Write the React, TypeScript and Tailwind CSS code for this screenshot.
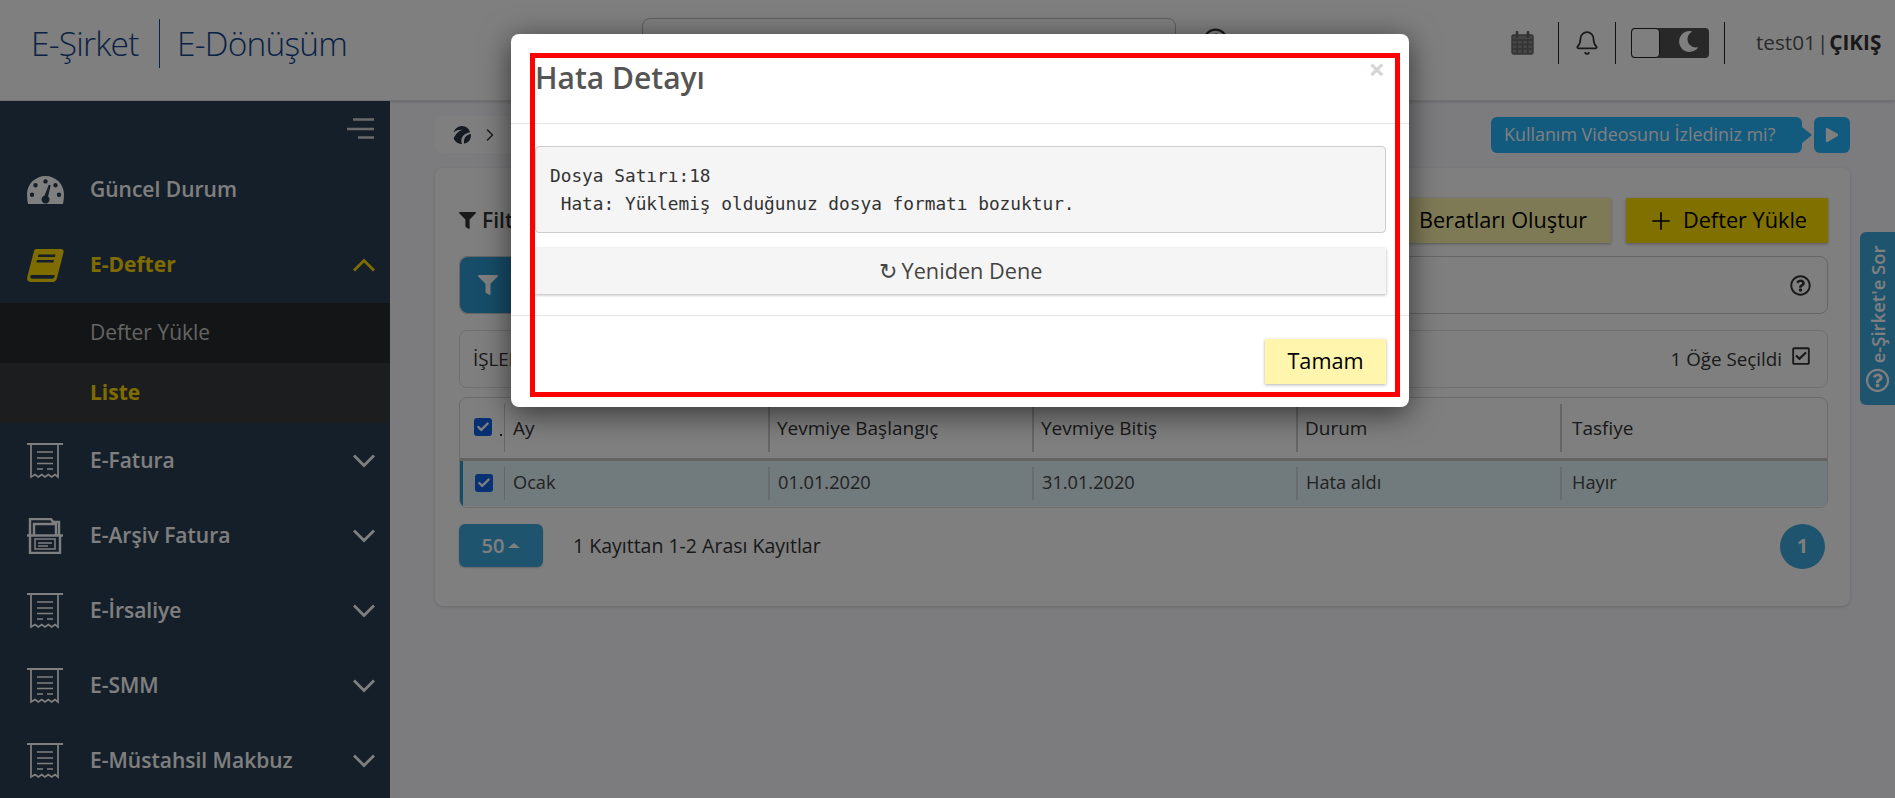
import { Bell, Check, ChevronRight, Plus } from 'lucide-react';
import { FaFilter, FaMoon, FaPlay, FaRegCheckSquare, FaRegQuestionCircle } from 'react-icons/fa';

function GaugeIcon() {
  return (
    <svg width="37" height="28" viewBox="0 0 37 28" fill="currentColor">
      <path
        fillRule="evenodd"
        d="M18.5 0C8.3 0 0 8.2 0 18.4c0 3.4.4 6.600 1 9.600h35c.6-3 1-6.200 1-9.600C37 8.200 28.700 0 18.500 0z
        M18.500 3.200a2.200 2.200 0 110 4.400 2.200 2.200 0 010-4.400z M8.500 7a2.200 2.200 0 110 4.400A2.200 2.200 0 018.500 7z
        M28.500 7a2.200 2.200 0 110 4.400 2.200 2.200 0 010-4.400z M5 16.500a2.200 2.200 0 110 4.400 2.200 2.200 0 010-4.400z
        M32 16.500a2.200 2.200 0 110 4.400 2.200 2.200 0 010-4.400z M21.800 8.700l1.900.5-2.600 11.200a4 4 0 11-3.500-.800z"
      />
    </svg>
  );
}

function BookIcon() {
  return (
    <svg width="37" height="33" viewBox="0 0 37 33" fill="currentColor">
      <path
        fillRule="evenodd"
        d="M9 0h25c2 0 3 1.500 2.500 3.500L30 29c-.700 2.500-2 4-4.500 4H4c-3 0-4.500-2-3.700-5L7 2c.300-1.200 1-2 2-2z
        M5 26c-1 0-1.800.7-1.800 1.800S4 29.800 5 29.800h20c1.500 0 2-.8 2.300-2l.4-1.800z
        M11.500 5.500l-.6 2.500h17l.6-2.500z M10 11l-.6 2.500h17l.6-2.500z"
      />
    </svg>
  );
}

function ReceiptIcon() {
  return (
    <svg width="36" height="36" viewBox="0 0 36 36" fill="none" stroke="currentColor" strokeWidth="1.700">
      <path d="M0 1h36" strokeWidth="2" />
      <path d="M4 1v33l4-2.500 3.300 2.500 3.400-2.500 3.300 2.500 3.300-2.500 3.400 2.500 3.300-2.500 3 2.500V1" />
      <path d="M10 9h16M10 15h16M10 20.500h16" />
      <path d="M10 26h6M20 26h6" />
    </svg>
  );
}

function ArchiveIcon() {
  return (
    <svg width="36" height="36" viewBox="0 0 36 36" fill="none" stroke="currentColor" strokeWidth="2.400">
      <path d="M3 18V1h21l2 3h6v14" />
      <path d="M7 17V6h22v11" />
      <path d="M0 17.500h36" />
      <path d="M3 18v17h30V18" />
      <path d="M8 21h20v10H8zM11 25h14M11 28h10" strokeWidth="1.500" />
    </svg>
  );
}

function BrandIcon() {
  return (
    <svg width="18" height="18" viewBox="0 0 18 18" fill="#283544">
      <path d="M9 0a9 9 0 00-8.700 6.800C2.500 4.500 6 3.300 9.500 3.800 6.500 5 3 7 .7 12.500 2 15.800 5.200 18 9 18c-1-2.500-1-5 .5-7.300C11 8 14 7 17.200 6.300A9 9 0 009 0zM17.800 8c-2.800.5-5.300 2-6.300 4.500-.7 1.800-.7 3.500-.2 5.200A9 9 0 0018 9c0-.3 0-.7-.2-1z" />
    </svg>
  );
}

function HamburgerIcon() {
  return (
    <svg width="27" height="21" viewBox="0 0 27 21" stroke="#d5d5d5" strokeWidth="2.500">
      <path d="M6 1.500h21M0 11h27M11 19.500h16" />
    </svg>
  );
}

function CalendarIcon() {
  return (
    <svg width="23" height="24" viewBox="0 0 23 24" fill="#8a8a8a" stroke="#666" strokeWidth="1.400" className="ml-[283px]">
      <rect x="1" y="4" width="21" height="19" rx="1.500" />
      <path d="M1 9h21M1 13.500h21M1 18h21M6.200 9v14M11.500 9v14M16.800 9v14" fill="none" />
      <path d="M6 1v5M17 1v5" strokeWidth="2.600" strokeLinecap="round" />
    </svg>
  );
}

function MenuChevron({ up }: { up?: boolean }) {
  return (
    <svg width="22" height="14" viewBox="0 0 22 14" fill="none" stroke="currentColor" strokeWidth="2.800" className="mr-[15px]">
      <path d={up ? 'M1 12.500L11 2.500l10 10' : 'M1 1.500l10 10 10-10'} />
    </svg>
  );
}

function TableCheckbox() {
  return (
    <span className="flex h-[18px] w-[18px] items-center justify-center rounded-[3px] bg-[#0f62e6]">
      <Check size={14} strokeWidth={4} className="text-white" />
    </span>
  );
}

const menu = [
  { label: 'E-Fatura', icon: <ReceiptIcon /> },
  { label: 'E-Arşiv Fatura', icon: <ArchiveIcon /> },
  { label: 'E-İrsaliye', icon: <ReceiptIcon /> },
  { label: 'E-SMM', icon: <ReceiptIcon /> },
  { label: 'E-Müstahsil Makbuz', icon: <ReceiptIcon /> },
];

const columns = ['Yevmiye Başlangıç', 'Yevmiye Bitiş', 'Durum'];
const rowValues = ['01.01.2020', '31.01.2020', 'Hata aldı'];

export default function App() {
  return (
    <div className="relative h-[798px] w-[1895px] overflow-hidden bg-[#f8f8fc] font-['Open_Sans',sans-serif] text-[#333]">
      {/* Üst bar */}
      <header className="flex h-[101px] items-center border-b border-[#e0e0e0] bg-white pb-[14px] shadow-[0_1px_3px_rgba(0,0,0,0.15)]">
        <div className="ml-[31px] flex w-[320px] items-center text-[33.5px] font-light tracking-[-0.8px] text-[#12458c]">
          <span>E-Şirket</span>
          <span className="ml-[20px] mr-[17px] h-[49px] w-[1.500px] bg-[#12458c]" />
          <span>E-Dönüşüm</span>
        </div>
        <div className="ml-[291px] flex h-[50px] w-[534px] items-start rounded-lg border border-[#bbb] pl-[14px] pt-[16px] text-[#333]">
          <span className="h-[18px] w-[18px] rounded-full border-2 border-[#333]" />
        </div>
        <FaRegQuestionCircle size={25} className="mb-[6px] ml-[27px] text-[#333]" />
        <CalendarIcon />
        <span className="ml-[24px] h-[42px] w-px bg-[#222]" />
        <Bell size={26} strokeWidth={1.600} className="ml-[15px] text-[#333]" />
        <span className="ml-[15px] h-[42px] w-px bg-[#222]" />
        <div className="ml-[15px] flex h-[30px] w-[78px] items-center rounded-[4px] bg-[#505050]">
          <span className="h-[30px] w-[29px] rounded-[4px] border border-[#222] bg-white" />
          <FaMoon size={21} className="mb-[3px] ml-[18px] text-white" />
        </div>
        <span className="ml-[15px] h-[42px] w-px bg-[#222]" />
        <div className="ml-[31px] whitespace-nowrap text-[20.700px] text-[#555]">
          test01<span className="mx-[1px]">|</span>
          <span className="font-bold text-[#333]">ÇIKIŞ</span>
        </div>
      </header>

      <div className="flex h-[697px]">
        {/* Sol menü */}
        <aside className="w-[390px] shrink-0 bg-[#2a3e54] text-[21px] font-semibold text-white">
          <div className="flex h-[51px] items-start justify-end pr-[16px] pt-[17px]">
            <HamburgerIcon />
          </div>
          <div className="flex h-[75px] items-center">
            <span className="flex w-[90px] justify-center text-white">
              <GaugeIcon />
            </span>
            Güncel Durum
          </div>
          <div className="flex h-[76px] items-center text-[#ffd800]">
            <span className="flex w-[90px] justify-center">
              <BookIcon />
            </span>
            <span className="flex-1 font-bold">E-Defter</span>
            <MenuChevron up />
          </div>
          <div className="flex h-[60px] items-center bg-[#282a2c] pl-[90px] font-normal text-[#c8c8c8]">Defter Yükle</div>
          <div className="flex h-[60px] items-center bg-[#383a3e] pl-[90px] font-bold text-[#ffd800]">Liste</div>
          {menu.map((item) => (
            <div key={item.label} className="flex h-[75px] items-center">
              <span className="flex w-[90px] justify-center">{item.icon}</span>
              <span className="flex-1">{item.label}</span>
              <MenuChevron />
            </div>
          ))}
        </aside>

        {/* İçerik */}
        <main className="flex-1 px-[45px] pt-[15px]">
          <div className="mb-[15px] flex h-[37px] items-center justify-between">
            <div className="flex h-[37px] w-[140px] items-center gap-[9px] rounded-lg bg-white pl-[18px]">
              <BrandIcon />
              <ChevronRight size={20} strokeWidth={1.800} className="text-[#333]" />
            </div>
            <div className="flex items-center">
              <div className="flex h-[36px] w-[311px] items-center rounded-md bg-[#24b4fc] pl-[13px] text-[17.900px] text-white">
                Kullanım Videosunu İzlediniz mi?
              </div>
              <span className="h-0 w-0 border-y-[8px] border-l-[10px] border-y-transparent border-l-[#24b4fc]" />
              <div className="ml-[2px] flex h-[36px] w-[36px] items-center justify-center rounded-md bg-[#24b4fc] text-white">
                <FaPlay size={14} />
              </div>
            </div>
          </div>

          <section className="rounded-lg bg-white pb-[37px] pl-[24px] pr-[22px] pt-[30px] shadow-[0_1px_3px_rgba(0,0,0,0.15)]">
            <div className="mb-[13px] flex h-[45px] items-center justify-between">
              <div className="flex items-center gap-[6px] text-[21px] font-semibold">
                <FaFilter size={17} />
                Filtre
              </div>
              <div className="flex gap-[15px] text-[21.700px] text-black">
                <button className="h-[45px] w-[216px] bg-[#fff5ad] shadow-[0_1px_3px_rgba(0,0,0,0.3)]">Beratları Oluştur</button>
                <button className="flex h-[45px] w-[202px] items-center justify-center gap-[8px] bg-[#ffe000] shadow-[0_1px_3px_rgba(0,0,0,0.3)]">
                  <Plus size={28} strokeWidth={1.400} />
                  Defter Yükle
                </button>
              </div>
            </div>

            <div className="mb-[16px] flex h-[58px] items-center justify-between rounded-lg border border-[#ccc] pr-[16px]">
              <div className="flex h-[56px] w-[56px] items-center justify-center rounded-l-lg bg-[#2f9bd0] text-white">
                <FaFilter size={20} />
              </div>
              <FaRegQuestionCircle size={21} />
            </div>

            <div className="mb-[9px] flex h-[58px] items-center justify-between rounded-lg border border-[#e0e0e0] pl-[13px] pr-[16px] text-[18.800px]">
              <span className="font-medium">İŞLEMLER</span>
              <span className="flex items-center gap-[9px]">
                1 Öğe Seçildi
                <FaRegCheckSquare size={20} className="mb-[6px]" />
              </span>
            </div>

            <div className="overflow-hidden rounded-lg border border-[#d8d8d8]">
              <div className="grid h-[63px] grid-cols-[44px_264px_264px_264px_264px_1fr] items-center border-b-[3px] border-[#c9c4bc] text-[19px] font-medium">
                <span className="relative flex justify-center pb-[3px] pl-[2px]">
                  <TableCheckbox />
                  <span className="absolute bottom-[3px] right-[2px] h-[2px] w-[2px] bg-[#333]" />
                </span>
                <span className="flex h-[48px] items-center border-l border-[#ccc] pl-[8px]">Ay</span>
                {columns.map((col) => (
                  <span key={col} className="flex h-[48px] items-center border-l-2 border-[#ccc] pl-[7px]">
                    {col}
                  </span>
                ))}
                <span className="flex h-[48px] items-center border-l-2 border-[#ccc] pl-[10px]">Tasfiye</span>
              </div>
              <div className="grid h-[45px] grid-cols-[41px_264px_264px_264px_264px_1fr] items-center border-l-[3px] border-[#2f9bd0] bg-[#e2f4fb] text-[18.200px] text-[#444]">
                <span className="flex justify-center pb-[2px] pl-[1px]">
                  <TableCheckbox />
                </span>
                <span className="flex h-[33px] items-center border-l border-[#ccc] pb-[2px] pl-[8px]">Ocak</span>
                {rowValues.map((val) => (
                  <span key={val} className="flex h-[33px] items-center border-l-2 border-[#d0d8dc] pb-[2px] pl-[8px]">
                    {val}
                  </span>
                ))}
                <span className="flex h-[33px] items-center border-l-2 border-[#d0d8dc] pb-[2px] pl-[10px]">Hayır</span>
              </div>
              <div className="h-px bg-white" />
            </div>

            <div className="mt-[16px] flex h-[45px] items-start justify-between">
              <div className="flex items-center">
                <button className="flex h-[43px] w-[84px] items-center justify-center gap-[4px] rounded-md bg-[#3fa9dc] text-[20px] font-semibold text-white shadow-[0_1px_2px_rgba(0,0,0,0.2)]">
                  50
                  <span className="h-0 w-0 border-x-[6px] border-b-[5px] border-x-transparent border-b-white" />
                </button>
                <span className="ml-[30px] text-[19.500px]">1 Kayıttan 1-2 Arası Kayıtlar</span>
              </div>
              <span className="mr-[3px] flex h-[45px] w-[45px] items-center justify-center rounded-full bg-[#3fa9dc] text-[19px] font-bold text-white">1</span>
            </div>
          </section>
        </main>
      </div>

      {/* Sağ sekme */}
      <div className="absolute right-0 top-[232px] flex h-[173px] w-[35px] items-center justify-center rounded-l-md bg-[#3fa9dc] text-white">
        <span className="flex rotate-[-90deg] items-center gap-[5px] whitespace-nowrap text-[18.500px] font-semibold">
          <FaRegQuestionCircle size={24} className="rotate-90" />
          e-Şirket'e Sor
        </span>
      </div>

      {/* Karartma */}
      <div className="absolute inset-0 bg-black/50" />

      {/* Hata modalı */}
      <div className="absolute left-[511px] top-[34px] w-[898px] rounded-lg bg-white text-[#555] shadow-[0_6px_30px_rgba(0,0,0,0.6)]">
        <div className="flex h-[90px] items-start justify-between border-b border-[#e5e5e5] pl-[24px] pr-[24px] pt-[25px]">
          <h4 className="text-[30px] font-semibold leading-[38px]">Hata Detayı</h4>
          <span className="-mt-[5px] text-[29px] font-bold leading-none text-[#d5d5d5]">×</span>
        </div>
        <div className="h-[192px] border-b border-[#e5e5e5] pl-[24px] pr-[23px] pt-[22px]">
          <pre className="h-[87px] rounded-[4px] border border-[#ccc] bg-[#f5f5f5] px-[14px] pt-[15px] font-['DejaVu_Sans_Mono',monospace] text-[17.800px] leading-[28px] text-[#333]">
            {'Dosya Satırı:18\n Hata: Yüklemiş olduğunuz dosya formatı bozuktur.'}
          </pre>
          <button className="mt-[15px] h-[46px] w-full bg-[#f5f5f5] text-[21.700px] text-[#444] shadow-[0_1px_3px_rgba(0,0,0,0.3)]">
            ↻<span className="ml-[5px]">Yeniden Dene</span>
          </button>
        </div>
        <div className="flex h-[91px] items-start justify-end pr-[23px] pt-[23px]">
          <button className="h-[45px] w-[121px] bg-[#fff5ad] text-[21.700px] text-black shadow-[0_1px_3px_rgba(0,0,0,0.3)]">Tamam</button>
        </div>
        {/* Kırmızı işaret kutusu */}
        <div className="absolute left-[19px] top-[19px] h-[344px] w-[870px] border-[5px] border-[#ff0000]" />
      </div>
    </div>
  );
}
